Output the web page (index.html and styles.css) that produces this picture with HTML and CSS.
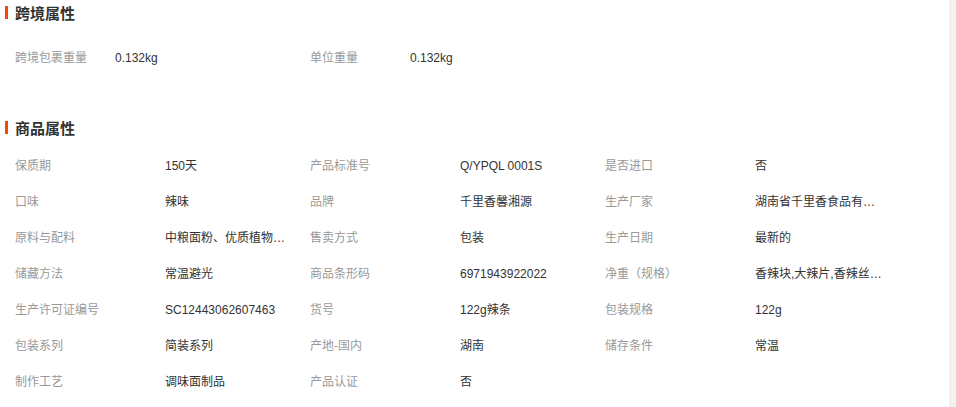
FILE: index.html
```html
<!DOCTYPE html>
<html lang="zh-CN">
<head>
<meta charset="utf-8">
<title>商品属性</title>
<link rel="stylesheet" href="styles.css">
</head>
<body>
<div class="page">
  <div class="content">
    <section class="sec sec-cross">
      <h3 class="sec-title">跨境属性</h3>
      <ul class="attrs attrs-cross">
        <li class="attr"><span class="k">跨境包裹重量</span><span class="v">0.132kg</span></li>
        <li class="attr"><span class="k">单位重量</span><span class="v">0.132kg</span></li>
      </ul>
    </section>
    <section class="sec sec-goods">
      <h3 class="sec-title">商品属性</h3>
      <ul class="attrs attrs-goods">
        <li class="attr"><span class="k">保质期</span><span class="v">150天</span></li>
        <li class="attr"><span class="k">产品标准号</span><span class="v">Q/YPQL 0001S</span></li>
        <li class="attr"><span class="k">是否进口</span><span class="v">否</span></li>
        <li class="attr"><span class="k">口味</span><span class="v">辣味</span></li>
        <li class="attr"><span class="k">品牌</span><span class="v">千里香馨湘源</span></li>
        <li class="attr"><span class="k">生产厂家</span><span class="v">湖南省千里香食品有限公司</span></li>
        <li class="attr"><span class="k">原料与配料</span><span class="v">中粮面粉、优质植物油、辣椒、食用盐</span></li>
        <li class="attr"><span class="k">售卖方式</span><span class="v">包装</span></li>
        <li class="attr"><span class="k">生产日期</span><span class="v">最新的</span></li>
        <li class="attr"><span class="k">储藏方法</span><span class="v">常温避光</span></li>
        <li class="attr"><span class="k">商品条形码</span><span class="v">6971943922022</span></li>
        <li class="attr"><span class="k">净重（规格）</span><span class="v">香辣块,大辣片,香辣丝,麻辣条</span></li>
        <li class="attr"><span class="k">生产许可证编号</span><span class="v">SC12443062607463</span></li>
        <li class="attr"><span class="k">货号</span><span class="v">122g辣条</span></li>
        <li class="attr"><span class="k">包装规格</span><span class="v">122g</span></li>
        <li class="attr"><span class="k">包装系列</span><span class="v">简装系列</span></li>
        <li class="attr"><span class="k">产地-国内</span><span class="v">湖南</span></li>
        <li class="attr"><span class="k">储存条件</span><span class="v">常温</span></li>
        <li class="attr"><span class="k">制作工艺</span><span class="v">调味面制品</span></li>
        <li class="attr"><span class="k">产品认证</span><span class="v">否</span></li>
      </ul>
    </section>
  </div>
  <div class="rail"></div>
</div>
</body>
</html>
```

FILE: styles.css
```css
html, body {
  margin: 0;
  padding: 0;
  background: #fff;
}

body {
  font-family: "Liberation Sans", "Noto Sans CJK SC", sans-serif;
  font-size: 12px;
  color: #333;
}

.page {
  display: flex;
  width: 956px;
  height: 407px;
  overflow: hidden;
}

.content {
  flex: 1;
  min-width: 0;
}

.rail {
  width: 7px;
  flex: none;
  background: #f1f1f1;
}

.sec-title {
  display: flex;
  align-items: center;
  gap: 7px;
  margin: 0;
  padding-left: 5px;
  height: 24px;
  font-size: 15px;
  font-weight: bold;
  color: #333;
}

.sec-title::before {
  content: "";
  width: 3px;
  height: 13px;
  background: #ff4400;
}

.sec-goods {
  margin-top: 39px;
}

.attrs {
  list-style: none;
  margin: 0;
  padding: 0 0 0 15px;
  display: grid;
}

.attrs-cross {
  margin-top: 16px;
  grid-template-columns: repeat(2, 295px);
}

.attrs-goods {
  margin-top: 9px;
  grid-template-columns: repeat(3, 295px);
}

.attr {
  display: flex;
  height: 36px;
  line-height: 36px;
}

.k {
  color: #999;
  flex: none;
}

.attrs-cross .k {
  width: 100px;
}

.attrs-goods .k {
  width: 150px;
}

.v {
  color: #333;
  width: 128px;
  white-space: nowrap;
  overflow: hidden;
  text-overflow: ellipsis;
}
```
